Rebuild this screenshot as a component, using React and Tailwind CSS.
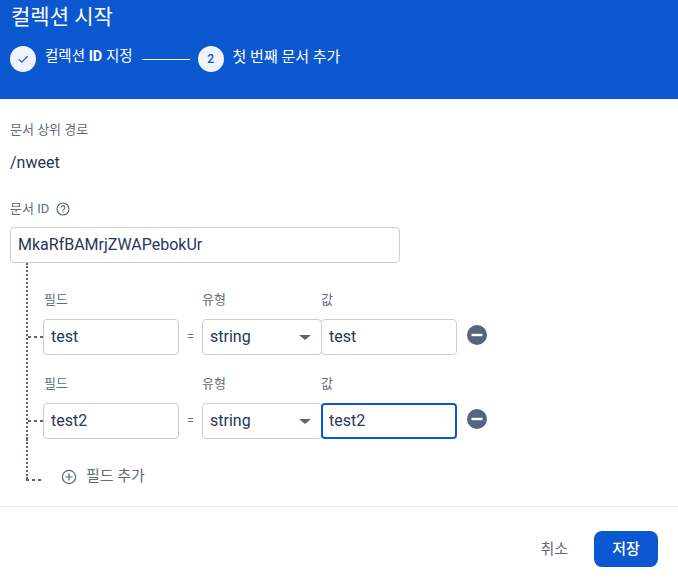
import React from "react";

const font = "font-['Roboto','Noto_Sans_CJK_KR',sans-serif]";
const stub = "h-[2px] w-[15px] bg-[repeating-linear-gradient(90deg,#56647f_0_3px,transparent_3px_6px)]";

function FieldRow({ name, value, focused }) {
    return (
        <div className="flex flex-col">
            <div className="flex h-[20px] items-center pb-[2px] pl-[16px] text-[13px] leading-none text-[#5f6b7f]">
                <span className="w-[158px]">필드</span>
                <span className="w-[119px]">유형</span>
                <span>값</span>
            </div>
            <div className="mt-[9px] flex items-center">
                <div className={stub} />
                <div className="flex h-[36px] w-[136px] items-center rounded-[4px] border border-[#c9ced8] px-[7px] text-[16px] text-[#27365a]">
                    {name}
                </div>
                <span className="w-[23px] text-center text-[12px] text-[#5f6b7f]">=</span>
                <div className="flex h-[36px] w-[120px] items-center justify-between rounded-[4px] border border-[#c9ced8] pl-[7px] pr-[10px] text-[16px] text-[#27365a]">
                    string
                    <span className="h-0 w-0 border-x-[6px] border-t-[5px] border-x-transparent border-t-[#56647f]" />
                </div>
                <div
                    className={`-ml-px flex h-[36px] w-[136px] items-center rounded-[4px] px-[7px] text-[16px] text-[#27365a] ${
                        focused ? "border-2 border-[#0b57d0] pl-[6px]" : "border border-[#c9ced8]"
                    }`}
                >
                    {value}
                </div>
                <svg className="mb-[4px] ml-[10px]" width="20" height="20" viewBox="0 0 20 20">
                    <circle cx="10" cy="10" r="10" fill="#56647f" />
                    <rect x="4.5" y="8.8" width="11" height="2.4" fill="#fff" />
                </svg>
            </div>
        </div>
    );
}

export default function App() {
    return (
        <div className={`h-[585px] w-[678px] overflow-hidden bg-white ${font}`}>
            <div className="flex h-[99px] flex-col bg-[#0b57d0] pl-[11px] text-white">
                <h1 className="mt-[3px] text-[21px] leading-[28px] font-normal">컬렉션 시작</h1>
                <div className="-ml-px mt-[15px] flex items-center text-[15px]">
                    <span className="flex h-[26px] w-[26px] items-center justify-center rounded-full bg-[#eef3fd]">
                        <svg width="14" height="14" viewBox="0 0 24 24" fill="none" stroke="#0b57d0" strokeWidth="2">
                            <path d="M5 12.5l5 5L20 7" />
                        </svg>
                    </span>
                    <span className="ml-[9px] -translate-y-[2px] text-[14.5px] font-normal">
                        컬렉션 <span className="font-bold">ID</span> 지정
                    </span>
                    <span className="ml-[9px] w-[48px] border-t border-white" />
                    <span className="ml-[8px] flex h-[26px] w-[26px] items-center justify-center rounded-full bg-[#eef3fd] text-[12px] font-medium text-[#0b57d0]">
                        2
                    </span>
                    <span className="ml-[9px] -translate-y-[2px] font-normal">첫 번째 문서 추가</span>
                </div>
            </div>

            <div className="pl-[10px] pt-[23px]">
                <div className="text-[13px] leading-[16px] text-[#5f6b7f]">문서 상위 경로</div>
                <div className="mt-[15px] text-[16px] leading-[20px] text-[#27365a]">/nweet</div>
                <div className="mt-[28px] flex items-center text-[13px] leading-[16px] text-[#5f6b7f]">
                    문서 ID
                    <svg className="ml-[7px]" width="14" height="14" viewBox="0 0 14 14" fill="none" stroke="#56647f" strokeWidth="1.1">
                        <circle cx="7" cy="7" r="6" />
                        <path d="M5.1 5.6A1.9 1.9 0 1 1 7.8 7.3c-.6.3-.8.6-.8 1.2" />
                        <path d="M7 9.6v1.1" />
                    </svg>
                </div>
                <div className="mt-[10px] flex h-[36px] w-[390px] items-center rounded-[4px] border border-[#c9ced8] px-[7px] text-[16px] text-[#27365a]">
                    MkaRfBAMrjZWAPebokUr
                </div>
                <div className="ml-[16px] w-[500px] border-l-2 border-dotted border-[#56647f] pt-[27px]">
                    <div className="flex flex-col gap-[19px]">
                        <FieldRow name="test" value="test" />
                        <FieldRow name="test2" value="test2" focused />
                    </div>
                </div>
                <div className="ml-[16px] flex h-[42px] w-[160px]">
                    <div className="flex w-[17px] shrink-0 flex-col">
                        <div className="h-[40px] border-l-2 border-dotted border-[#56647f]" />
                        <div className={stub + " w-[17px]"} />
                    </div>
                    <div className="ml-[18px] mt-[28px] flex h-[20px] items-center text-[15px] leading-[20px] text-[#5f6b7f]">
                        <svg width="16" height="16" viewBox="0 0 16 16" fill="none" stroke="#56647f" strokeWidth="1.2">
                            <circle cx="8" cy="8" r="6.6" />
                            <path d="M8 4.5v7M4.5 8h7" />
                        </svg>
                        <span className="ml-[9px] -translate-y-[1px] whitespace-nowrap">필드 추가</span>
                    </div>
                </div>
            </div>

            <div className="mt-[25px] flex h-[79px] items-start justify-end border-t border-[#e3e6ec] pr-[20px] pt-[24px]">
                <button type="button" className="mr-[26px] h-[36px] text-[15px] text-[#5f6b7f]">
                    취소
                </button>
                <button type="button" className="h-[36px] w-[64px] rounded-[8px] bg-[#0b57d0] text-[15px] font-medium text-white">
                    저장
                </button>
            </div>
        </div>
    );
}
